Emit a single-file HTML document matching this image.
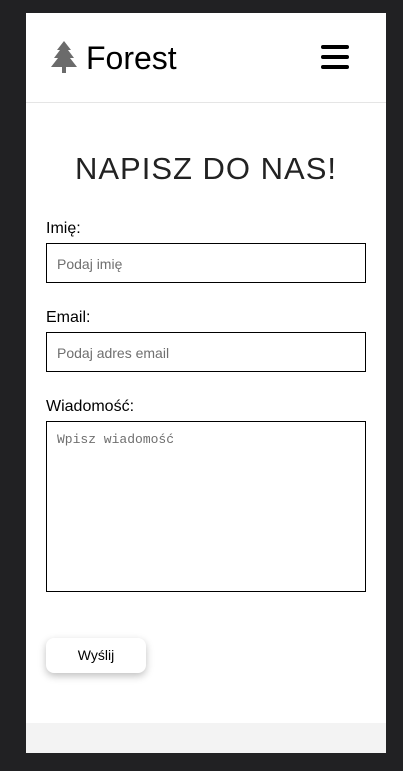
<!DOCTYPE html>
<html><head><meta charset="utf-8"><style>
*{box-sizing:border-box;margin:0;padding:0}
body{width:403px;height:771px;background:#212123;position:relative;font-family:"Liberation Sans",sans-serif;overflow:hidden}
.page{position:absolute;left:26px;top:13px;width:360px;height:740px;background:#fff}
.hdr{position:absolute;left:0;top:0;width:360px;height:90px;border-bottom:1px solid #e5e5e5}
.logo{position:absolute;left:60px;top:27px;font-size:32px;color:#000}
.tree{position:absolute;left:24px;top:28px}
.burger{position:absolute;left:295px;top:32px;width:28px}
.burger div{height:4px;background:#000;border-radius:2px;margin-bottom:6px}
h1{position:absolute;left:0;width:360px;top:138px;text-align:center;font-weight:normal;font-size:31px;letter-spacing:1px;color:#222}
.lbl{position:absolute;left:20px;font-size:16px;color:#000}
.inp{position:absolute;left:20px;width:320px;height:40px;border:1.5px solid #000;font-size:14px;color:#6f6f6f;padding:12px 10px}
.ta{font-family:"Liberation Mono",monospace;font-size:13px;padding:10px}
.btn{position:absolute;left:20px;top:625px;width:100px;height:35px;border-radius:8px;background:#fff;box-shadow:0 3px 8px rgba(0,0,0,.25);text-align:center;line-height:35px;font-size:14px;color:#000}
.ftr{position:absolute;left:0;top:710px;width:360px;height:30px;background:#f3f3f3}
</style></head><body>
<div class="page">
<div class="hdr">
<svg class="tree" width="28" height="32" viewBox="0 0 28 32"><path fill="#6b6b6b" d="M14 0 L21 9 H18 L24 17 H20 L27 26 H16 V32 H12 V26 H1 L8 17 H4 L10 9 H7 Z"/></svg>
<div class="logo">Forest</div>
<div class="burger"><div></div><div></div><div></div></div>
</div>
<h1>NAPISZ DO NAS!</h1>
<div class="lbl" style="top:207px">Imię:</div>
<div class="inp" style="top:230px">Podaj imię</div>
<div class="lbl" style="top:296px">Email:</div>
<div class="inp" style="top:319px">Podaj adres email</div>
<div class="lbl" style="top:385px">Wiadomość:</div>
<div class="inp ta" style="top:408px;height:171px">Wpisz wiadomość</div>
<div class="btn">Wyślij</div>
<div class="ftr"></div>
</div>
</body></html>
